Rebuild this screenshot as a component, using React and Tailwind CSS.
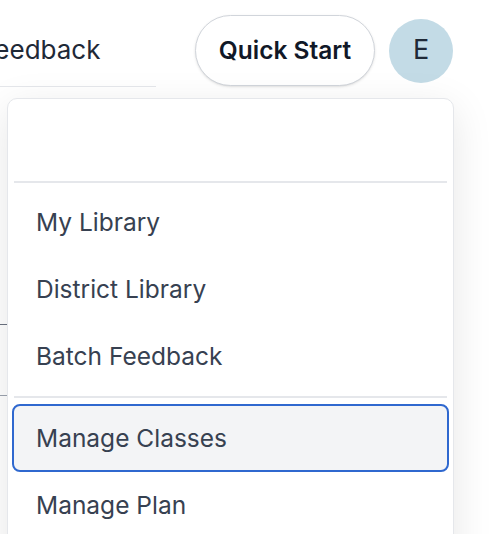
export default function App() {
  const items = [
    { label: 'My Library' },
    { label: 'District Library' },
    { label: 'Batch Feedback', divider: true },
    { label: 'Manage Classes', active: true },
    { label: 'Manage Plan' },
  ];

  return (
    <div className="relative w-[490px] h-[534px] overflow-hidden bg-white font-['Inter','Noto_Sans',sans-serif]">
      {/* page content behind the menu */}
      <div className="flex flex-col">
        <header className="flex items-start h-[98px] pr-[37px]">
          <nav className="w-[156px] h-[87px] border-b border-[#e5e7eb] flex items-center pt-[14px] overflow-hidden">
            <span className="ml-[-20px] text-[26px] text-[#1f2937] whitespace-nowrap leading-none">
              Feedback
            </span>
          </nav>
          <div className="ml-auto mt-[15px] flex items-center gap-[14px]">
            <button className="w-[180px] h-[71px] rounded-full border border-[#d1d5db] bg-white shadow-sm text-[24.5px] font-semibold text-[#111827]">
              Quick Start
            </button>
            <div className="w-[64px] h-[64px] rounded-full bg-[#c3dbe6] flex items-center justify-center text-[27px] text-[#1f2937]">
              E
            </div>
          </div>
        </header>
        <div className="mt-[226px] w-[60px] border-t border-[#6b7280]" />
        <div className="mt-[70px] w-[60px] border-t border-[#9ca3af]" />
      </div>

      {/* dropdown menu */}
      <div className="absolute left-[7px] top-[98px] w-[447px] h-[480px] rounded-[10px] border border-[#e5e7eb] bg-white shadow-[0_10px_40px_rgba(0,0,0,0.1)]">
        <div className="h-[76px]" />
        <div className="mx-[6px] my-[6px] h-[2px] bg-[#e5e7eb]" />
        {items.map((item) => (
          <div key={item.label}>
            <div
              className={`mx-[4px] h-[67px] flex items-center pl-[22px] rounded-[8px] border-2 text-[24.5px] text-[#374151] ${
                item.active
                  ? 'border-[#2f68cf] bg-[#f3f4f6] h-[68px]'
                  : 'border-transparent'
              }`}
            >
              {item.label}
            </div>
            {item.divider && (
              <div className="mx-[6px] my-[6px] h-[2px] bg-[#e5e7eb]" />
            )}
          </div>
        ))}
      </div>
    </div>
  );
}
